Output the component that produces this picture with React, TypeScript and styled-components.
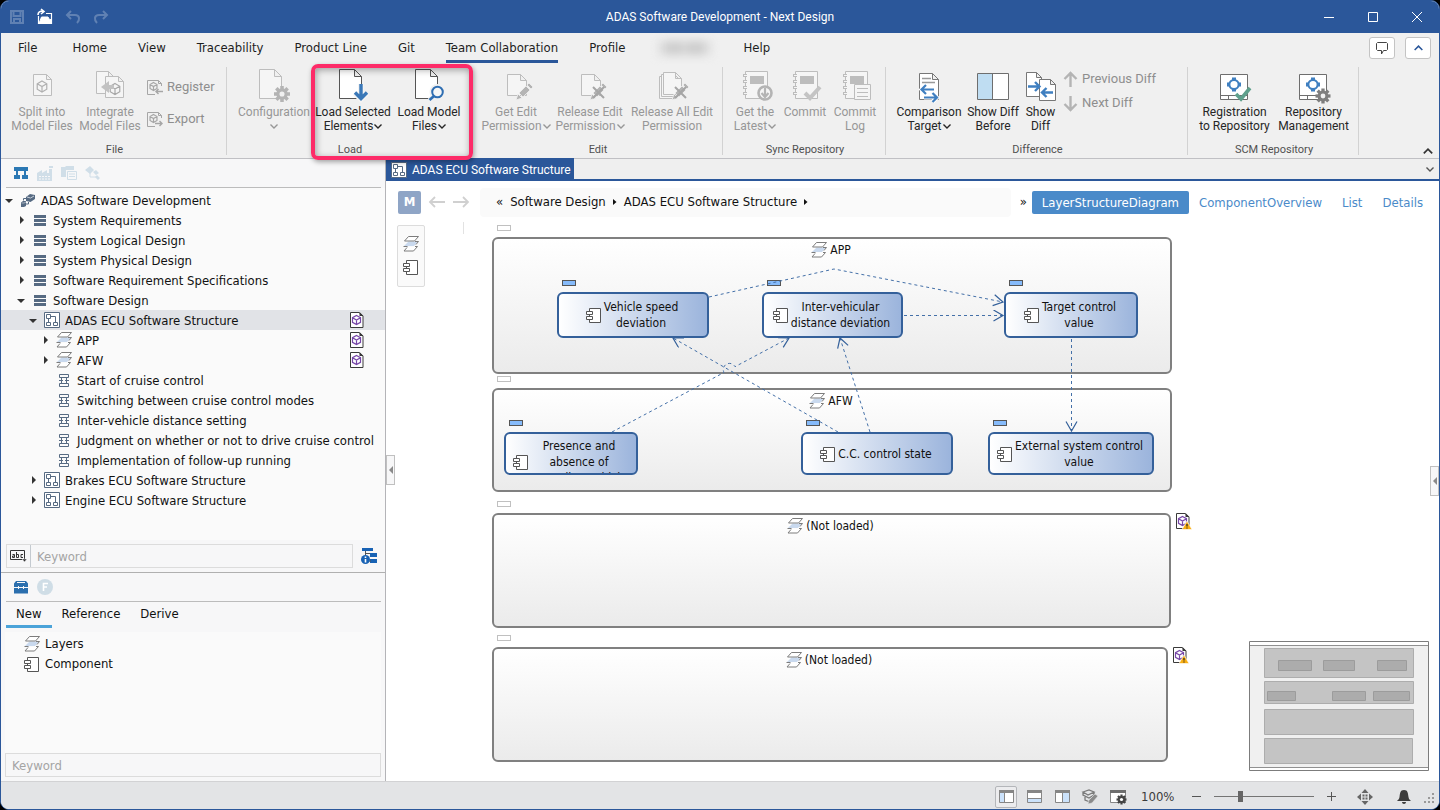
import React from "react";
import styled, { createGlobalStyle, css } from "styled-components";

const uiFont = `"DejaVu Sans Condensed", "DejaVu Sans", sans-serif`;
const ribbonFont = `Roboto, "Open Sans", sans-serif`;
const brand = "#2b579a";
const link = "#4a8ac9";
const slate = "#566a82";

const GlobalStyle = createGlobalStyle`
  *, *::before, *::after { box-sizing: border-box; }
  body { margin: 0; background: #000; color: #111; font: 13px/20px ${uiFont}; }
  button { margin: 0; padding: 0; border: 0; background: none; color: inherit; font: inherit; cursor: pointer; }
  ul { margin: 0; padding: 0; list-style: none; }
  a { text-decoration: none; }
  svg { display: block; overflow: visible; flex: none; }
`;

/* ---------- window frame ---------- */

const Window = styled.div`
  display: flex;
  flex-direction: column;
  min-height: 100vh;
  border: 1px solid ${brand};
  border-radius: 9px;
  overflow: hidden;
  background: #fff;
`;

const TitleBar = styled.header`
  display: grid;
  grid-template-columns: 1fr auto 1fr;
  align-items: center;
  height: 32px;
  background: ${brand};
  color: #fff;
`;

const Title = styled.h1`
  margin: 0;
  font: 400 12px/20px ${ribbonFont};
`;

const QuickActions = styled.div`
  display: flex;
  gap: 12px;
  padding-left: 8px;
`;

const QuickButton = styled.button<{ $dim?: boolean }>`
  color: #fff;
  opacity: ${(p) => (p.$dim ? 0.25 : 1)};
`;

const WindowButtons = styled.div`
  display: flex;
  justify-content: flex-end;
`;

const WindowButton = styled.button`
  display: grid;
  place-items: center;
  width: 44px;
  height: 32px;
`;

const MenuBar = styled.nav`
  display: flex;
  align-items: center;
  gap: 31px;
  height: 30px;
  padding: 0 8px 0 17px;
  background: #f0f0f0;
`;

const MenuItem = styled.button<{ $active?: boolean }>`
  height: 30px;
  padding-top: 2px;
  border-bottom: 3px solid ${(p) => (p.$active ? brand : "transparent")};
  color: #1e1e1e;
  white-space: nowrap;
  &:first-child { margin-right: 4px; }
`;

const BlurredItem = styled.div`
  width: 52px;
  height: 14px;
  margin: 0 2px;
  background: linear-gradient(90deg, #dcdcdc, #c8c8c8 30%, #d6d6d6 50%, #c6c6c6 70%, #e0e0e0);
  filter: blur(5px);
`;

const MenuTools = styled.div`
  display: flex;
  gap: 10px;
  margin-left: auto;
`;

const MenuTool = styled.button`
  display: grid;
  place-items: center;
  width: 26px;
  height: 22px;
  border: 1px solid #c4c4c4;
  border-radius: 3px;
  background: #fff;
`;

/* ---------- ribbon ---------- */

const RibbonBar = styled.section`
  display: flex;
  height: 96px;
  padding-top: 4px;
  border-bottom: 1px solid #c0c0c4;
  background: #f0f0f0;
  font: 12px/14px ${ribbonFont};
`;

const Group = styled.div<{ $divided?: boolean }>`
  position: relative;
  display: flex;
  flex-direction: column;
  justify-content: space-between;
  height: 88px;
  padding: 0 5px 0 7px;
  border-right: 1px solid ${(p) => (p.$divided ? "#d2d2d2" : "transparent")};
`;

const GroupItems = styled.div`
  display: flex;
`;

const GroupLabel = styled.div`
  height: 12px;
  color: #505050;
  font-size: 11px;
  line-height: 14px;
  text-align: center;
`;

const BigButton = styled.button<{ $width: number; $off?: boolean }>`
  display: flex;
  flex-direction: column;
  align-items: center;
  gap: 4px;
  width: ${(p) => p.$width}px;
  padding-top: 2px;
  color: ${(p) => (p.$off ? "#979797" : "#262626")};
  white-space: nowrap;
`;

const Caption = styled.span`
  display: block;
`;

const CaptionLine = styled.span`
  display: flex;
  align-items: center;
  justify-content: center;
  gap: 1px;
  height: 14px;
`;

const SmallColumn = styled.div<{ $gap: number; $top: number; $width: number }>`
  display: flex;
  flex-direction: column;
  gap: ${(p) => p.$gap}px;
  width: ${(p) => p.$width}px;
  padding: ${(p) => p.$top}px 0 0 3px;
`;

const SmallButton = styled.button`
  display: flex;
  align-items: center;
  gap: 4px;
  height: 16px;
  color: #8e8e8e;
  font-size: 13px;
  white-space: nowrap;
`;

const Highlight = styled.div`
  position: absolute;
  top: -3px;
  right: -2px;
  bottom: -5px;
  left: 84px;
  z-index: 5;
  border: 4px solid #fd2b68;
  border-radius: 7px;
  box-shadow: 1px 2px 5px rgba(0, 0, 0, 0.35), inset 1px 2px 7px rgba(0, 0, 0, 0.35);
  pointer-events: none;
`;

const RibbonCollapse = styled.button`
  align-self: flex-end;
  margin: 0 6px 4px auto;
`;

/* ---------- body ---------- */

const Body = styled.div`
  display: flex;
  flex: 1;
`;

const Sidebar = styled.aside`
  display: flex;
  flex-direction: column;
  width: 385px;
  flex: none;
  border-right: 1px solid #b4b4b8;
  background: #f7f7f8;
`;

const Pane = styled.section<{ $grow?: boolean }>`
  display: flex;
  flex-direction: column;
  ${(p) =>
    p.$grow
      ? css`flex: 1;`
      : css`
          min-height: 209px;
          border-top: 1px solid #b0b0b0;
        `}
`;

const PaneTools = styled.div`
  display: flex;
  align-items: center;
  gap: 8px;
  height: 29px;
  margin: 0 4px 0 5px;
  padding-left: 7px;
  border-bottom: 1px solid #bcbcbc;
`;

const Tree = styled.ul`
  flex: 1;
  padding-top: 2px;
  background: #fafafa;
`;

const TreeRow = styled.li<{ $level: number; $selected?: boolean }>`
  display: flex;
  align-items: center;
  height: 20px;
  padding-left: ${(p) => p.$level * 12}px;
  padding-right: 20px;
  background: ${(p) => (p.$selected ? "#e1e3e7" : "transparent")};
  white-space: nowrap;
`;

const Toggle = styled.button`
  display: grid;
  place-items: center;
  flex: none;
  width: 16px;
  height: 20px;
`;

const ToggleSpace = styled.span`
  flex: none;
  width: 16px;
`;

const TreeIcon = styled.span`
  display: grid;
  place-items: center;
  flex: none;
  width: 22px;
  margin-right: 2px;
`;

const TreeLabel = styled.button`
  flex: 1;
  min-width: 0;
  padding-top: 2px;
  text-align: left;
`;

const SearchRow = styled.form`
  display: flex;
  align-items: center;
  gap: 8px;
  padding: 4px 8px 4px 5px;
`;

const SearchBox = styled.div`
  display: flex;
  flex: 1;
  height: 24px;
  border: 1px solid #dcdcdc;
`;

const SearchMode = styled.button`
  display: grid;
  place-items: center;
  width: 24px;
  border-right: 1px solid #c4cad0;
`;

const SearchInput = styled.input`
  flex: 1;
  min-width: 0;
  padding: 1px 6px 0;
  border: 0;
  outline: 0;
  background: transparent;
  font: 13px/20px ${uiFont};
  &::placeholder { color: #a4a4a4; opacity: 1; }
`;

const FilterBox = styled.div`
  display: flex;
  height: 24px;
  margin: 0 4px 4px;
  border: 1px solid #dcdcdc;
`;

const Tabs = styled.div`
  display: flex;
  padding-left: 5px;
`;

const Tab = styled.button<{ $active?: boolean }>`
  height: 26px;
  padding: 0 10px;
  border-bottom: 3px solid ${(p) => (p.$active ? "#4ba3d9" : "transparent")};
`;

const ShapeList = styled.ul`
  flex: 1;
  margin: 4px 4px 0;
  padding: 2px 19px;
  background: #fafafa;
`;

const Shape = styled.li`
  display: flex;
  align-items: center;
  gap: 5px;
  height: 20px;
`;

/* ---------- editor ---------- */

const Editor = styled.main`
  position: relative;
  display: flex;
  flex: 1;
  flex-direction: column;
  min-width: 0;
`;

const DocTabs = styled.div`
  display: flex;
  align-items: center;
  justify-content: space-between;
  height: 22px;
  padding-right: 5px;
  border-bottom: 2px solid ${brand};
  background: #efefef;
`;

const DocTab = styled.button`
  display: flex;
  align-items: center;
  gap: 5px;
  height: 22px;
  padding: 2px 3px 0 5px;
  background: ${brand};
  color: #fff;
  font: 12px/20px ${ribbonFont};
`;

const DocHeader = styled.div`
  display: flex;
  align-items: center;
  height: 36px;
  padding: 6px 6px 0 12px;
`;

const ModelBadge = styled.button`
  width: 23px;
  height: 23px;
  border-radius: 2px;
  background: #8fa5c6;
  color: #fff;
  font-weight: 700;
`;

const HistoryButtons = styled.div`
  display: flex;
  gap: 8px;
  padding: 0 11px 0 8px;
  color: #d0d0d0;
`;

const Breadcrumbs = styled.nav`
  display: flex;
  flex: 1;
  align-items: center;
  gap: 7px;
  height: 29px;
  padding-left: 16px;
  border-radius: 4px;
  background: #fafafa;
`;

const Crumb = styled.a`
  color: #111;
  white-space: nowrap;
`;

const ViewTabs = styled.div`
  display: flex;
  align-items: center;
  padding-left: 9px;
`;

const ViewTab = styled.button<{ $active?: boolean }>`
  height: 23px;
  padding: 1px 10px 0;
  border-radius: 2px;
  color: ${(p) => (p.$active ? "#fff" : link)};
  background: ${(p) => (p.$active ? link : "transparent")};
`;

const MoreViews = styled.button`
  padding-right: 5px;
`;

const Canvas = styled.div`
  position: relative;
  flex: 1;
  min-height: 564px;
  font-size: 12px;
  line-height: 16px;
`;

const Palette = styled.div`
  position: absolute;
  top: 8px;
  left: 11px;
  display: flex;
  flex-direction: column;
  gap: 7px;
  padding: 10px 5px 11px;
  border: 1px solid #dcdcdc;
  border-radius: 2px;
  background: #fafafa;
`;

const Guide = styled.div`
  position: absolute;
  top: 5px;
  left: 77px;
  width: 1px;
  height: 12px;
  background: #e2e2e2;
`;

type Box = { $x: number; $y: number; $w: number; $h: number };

const placed = css<Box>`
  position: absolute;
  left: ${(p) => p.$x}px;
  top: ${(p) => p.$y}px;
  width: ${(p) => p.$w}px;
  height: ${(p) => p.$h}px;
`;

const Layer = styled.section<Box>`
  ${placed}
  border: 2px solid #808080;
  border-radius: 6px;
  background: linear-gradient(#fff, #ebebeb);
`;

const LayerTitle = styled.h2`
  display: flex;
  justify-content: center;
  gap: 3px;
  margin: 3px 2px 0 0;
  font: 400 12px/16px ${uiFont};
`;

const LayerMark = styled.span`
  position: absolute;
  top: -14px;
  left: 3px;
  width: 14px;
  height: 6px;
  border: 1px solid #c0c0c0;
  background: #fff;
`;

const LayerStatus = styled.span`
  position: absolute;
  top: -2px;
  right: -22px;
`;

const Connectors = styled.svg`
  position: absolute;
  top: 0;
  left: 0;
  width: 100%;
  height: 100%;
  pointer-events: none;
`;

const NodeMark = styled.span<{ $x: number; $y: number }>`
  position: absolute;
  left: ${(p) => p.$x + 5}px;
  top: ${(p) => p.$y - 12}px;
  width: 14px;
  height: 6px;
  border: 1px solid #555;
  background: #86bbfb;
`;

const Node = styled.div<Box>`
  ${placed}
  overflow: hidden;
  display: grid;
  grid-template-columns: auto auto;
  align-content: safe center;
  align-items: center;
  justify-content: center;
  gap: 2px;
  padding: 4px 2px 4px 0;
  border: 2px solid #34609a;
  border-radius: 6px;
  background: linear-gradient(90deg, #fff, #9bb4dc);
  text-align: center;
  white-space: pre-line;
`;

const Minimap = styled.svg`
  position: absolute;
  right: 10px;
  bottom: 10px;
  background: #fff;
`;

const Collapser = styled.button<{ $side: "left" | "right" }>`
  position: absolute;
  ${(p) => p.$side}: 0;
  top: ${(p) => (p.$side === "left" ? 296 : 307)}px;
  z-index: 2;
  display: grid;
  place-items: center;
  width: 9px;
  height: 30px;
  border: 1px solid #c0c0c0;
  background: #f7f7f8;
`;

/* ---------- status bar ---------- */

const StatusBar = styled.footer`
  display: flex;
  align-items: center;
  justify-content: flex-end;
  height: 28px;
  padding: 2px 4px 0;
  border-top: 1px solid #d2d2d4;
  background: #e3e4e6;
  color: #3c3c3c;
`;

const LayoutButtons = styled.div`
  display: flex;
  gap: 6px;
  margin-right: 12px;
`;

const LayoutButton = styled.button<{ $pressed?: boolean }>`
  display: grid;
  place-items: center;
  width: 22px;
  height: 22px;
  border: 1px solid ${(p) => (p.$pressed ? "#b4b6ba" : "transparent")};
  border-radius: 2px;
  background: ${(p) => (p.$pressed ? "#ececee" : "transparent")};
`;

const ZoomLabel = styled.output`
  width: 50px;
`;

const ZoomSlider = styled.input`
  width: 100px;
  height: 12px;
  margin: 0 12px;
  appearance: none;
  background: linear-gradient(#747474, #747474) center / 100% 1px no-repeat;
  &::-webkit-slider-thumb {
    appearance: none;
    width: 5px;
    height: 11px;
    background: #666;
  }
`;

const StatusIcons = styled.div`
  display: flex;
  align-items: center;
  gap: 23px;
  margin-left: 20px;
`;

const Grip = styled.span`
  align-self: flex-end;
  margin: 0 0 5px 12px;
`;

/* ---------- icons ---------- */

const Chevron = ({ up, color = "currentColor", w = 8 }: { up?: boolean; color?: string; w?: number }) => (
  <svg width={w} height={w / 2 + 1} viewBox="0 0 8 5" fill="none" stroke={color} strokeWidth="1.4">
    <path d={up ? "M.5 4.500 4 1l3.500 3.500" : "M.5.5 4 4 7.500.5"} />
  </svg>
);

const docPath = (x: number, y: number, w: number, h: number, f = 7) =>
  `M${x} ${y}h${w - f}l${f} ${f}v${h - f}h${-w}zM${x + w - f} ${y}v${f}h${f}`;

const Doc = (p: { x: number; y: number; w: number; h: number; f?: number; c?: string; bg?: string }) => (
  <path d={docPath(p.x + 0.5, p.y + 0.5, p.w, p.h, p.f)} fill={p.bg ?? "#fff"} stroke={p.c ?? "#6a6a6a"} />
);

const Cube = ({ x, y, r, c }: { x: number; y: number; r: number; c: string }) => {
  const dx = r * 0.87;
  const h = r / 2;
  return (
    <path
      transform={`translate(${x} ${y})`}
      d={`M0 ${-r}L${dx} ${-h}V${h}L0 ${r}L${-dx} ${h}V${-h}ZM${-dx} ${-h}L0 0L${dx} ${-h}M0 0V${r}`}
      fill="none"
      stroke={c}
      strokeWidth="1.2"
    />
  );
};

const Gear = ({ x, y, r, c, hole = "#f0f0f0" }: { x: number; y: number; r: number; c: string; hole?: string }) => (
  <g transform={`translate(${x} ${y})`} fill={c}>
    {[0, 45, 90, 135].map((a) => (
      <rect key={a} x={-r * 0.22} y={-r} width={r * 0.44} height={r * 2} transform={`rotate(${a})`} />
    ))}
    <circle r={r * 0.72} />
    <circle r={r * 0.32} fill={hole} />
  </g>
);

const grey = "#bdbdbd";
const pale = "#f5f5f5";

const Pencil = () => (
  <g fill="#b4b4b4" stroke="#f0f0f0" strokeWidth="0.8">
    <path d="m16 31 2-6 4 4z" />
    <path d="m19 24 7-7 4 4-7 7z" />
    <path d="m27 16 2-2 4 4-2 2z" />
  </g>
);

const Cross = () => <path d="m19 18 11 11M30 18 19 29" stroke="#a6a6a6" strokeWidth="2" />;

const Book = () => (
  <g>
    <path d="M6.500 2.500h22v27h-22z" fill={pale} stroke={grey} />
    <path d="M11 7h14v8h-14z" fill={grey} />
    <path d="M4 6.500h4M4 12.500h4M4 18.500h4M4 24.500h4" stroke={grey} strokeWidth="3" />
    <path d="M5 6.500h4M5 12.500h4M5 18.500h4M5 24.500h4" stroke={pale} />
  </g>
);

const Repo = () => (
  <g fill="none">
    <path d="M1.500 5.500h27v25h-27zM1.500 26.500h27M9.500 27v4M20.500 27v4" fill="#fff" stroke="#6e6e6e" />
    <circle cx="15" cy="15.500" r="4.600" stroke="#3f7fc0" strokeWidth="2" />
    <path d="M15 8.500v3M15 19.500v3M8 15.500h3M19 15.500h3" stroke="#3f7fc0" strokeWidth="4" />
  </g>
);

const big: Record<string, React.ReactNode> = {
  split: (<><Doc x={7} y={5} w={18} h={21} f={5} c={grey} bg={pale} /><Cube x={16} y={17.5} r={5.5} c="#b0b0b0" /></>),
  integrate: (
    <>
      <Doc x={2} y={2} w={17} h={22} f={5} c={grey} bg={pale} />
      <Doc x={11} y={7} w={18} h={21} f={5} c={grey} bg={pale} />
      <Cube x={21} y={20} r={5.5} c="#a8a8a8" />
      <path d="m7 18 8-6v4h5v4h-5v4z" fill="#c2c2c2" />
    </>
  ),
  config: (<><Doc x={1} y={0} w={22} h={29} c={grey} bg={pale} /><Gear x={24} y={25} r={8} c="#b4b4b4" /></>),
  loadSelected: (
    <>
      <Doc x={2} y={0} w={22} h={29} c="#555" />
      <path d="M24 15v15M18 24l6 6 6-6" fill="none" stroke="#f4f4f4" strokeWidth="6" />
      <path d="M24 15v14M18 23.500l6 6 6-6" fill="none" stroke="#3a78b8" strokeWidth="3.400" />
    </>
  ),
  loadModel: (
    <>
      <Doc x={2} y={0} w={22} h={29} c="#555" />
      <circle cx="24.500" cy="23" r="5.500" fill="#fff" stroke="#f0f0f0" strokeWidth="5" />
      <path d="m21 27-4.500 4" stroke="#f0f0f0" strokeWidth="5" />
      <circle cx="24.500" cy="23" r="5.300" fill="#f6f6f6" stroke="#2f6eb2" strokeWidth="2" />
      <path d="m21 27-4.500 4" stroke="#2f6eb2" strokeWidth="2.600" />
    </>
  ),
  getEdit: (<><Doc x={7} y={5} w={19} h={21} c={grey} bg={pale} f={6} /><Pencil /></>),
  releaseEdit: (<><Doc x={7} y={5} w={19} h={21} c={grey} bg={pale} f={6} /><Pencil /><Cross /></>),
  releaseAll: (
    <>
      <Doc x={3} y={7} w={17} h={22} c={grey} bg={pale} f={5} />
      <Doc x={5} y={5} w={18} h={22} c={grey} bg={pale} f={5} />
      <Doc x={7} y={3} w={18} h={22} c={grey} bg={pale} f={6} />
      <Pencil />
      <Cross />
    </>
  ),
  latest: (
    <>
      <Book />
      <circle cx="26" cy="24" r="6.500" fill={pale} stroke="#b4b4b4" strokeWidth="2.600" />
      <path d="M26 19v9M22.500 24l3.500 4 3.500-4" fill="none" stroke="#b4b4b4" strokeWidth="2.200" />
    </>
  ),
  commit: (<><Book /><path d="m16 24 5 5 10-11" fill="none" stroke="#c4c4c4" strokeWidth="4" /></>),
  log: (
    <>
      <Book />
      <path d="M15.500 15.500h16v15h-16z" fill={pale} stroke={grey} />
      <path d="M18 19.500h11M18 23.500h11M18 27.500h11" stroke={grey} />
    </>
  ),
  compare: (
    <>
      <Doc x={6} y={4} w={19} h={26} c="#777" f={6} />
      <path d="M9 9.500h9M9 13.500h13" stroke="#999" strokeWidth="1.500" />
      <path d="M21 20.500H9M13 16l-4.500 4.500L13 25M11 28.500h12M19.500 24l4.500 4.500-4.500 4.500" fill="none" stroke="#fff" strokeWidth="4" />
      <path d="M21 20.500H9M13 16l-4.500 4.500L13 25M11 28.500h12M19.500 24l4.500 4.500-4.500 4.500" fill="none" stroke="#3f7fc0" strokeWidth="2.200" />
    </>
  ),
  before: (
    <>
      <path d="M.5 4.500h31v26H.5z" fill="#fff" />
      <path d="M1 5h15v25H1z" fill="#bfddf2" />
      <path d="M.5 4.500h31v26H.5zM15.500 4.500v26" fill="none" stroke="#6e6e6e" />
    </>
  ),
  showDiff: (
    <>
      <Doc x={1} y={3} w={15} h={24} c="#777" f={5} />
      <Doc x={14} y={10} w={16} h={21} c="#777" f={5} />
      <path d="M3 17.500h10M10 13l4.500 4.500L10 22M28 23.500H18M21.500 19 17 23.500l4.500 4.500" fill="none" stroke="#3f7fc0" strokeWidth="2.400" />
    </>
  ),
  register: (<><Repo /><path d="m17 25 5 5 9-11" fill="none" stroke="#5fa08c" strokeWidth="3.600" /></>),
  manage: (<><Repo /><Gear x={25} y={27} r={7.5} c="#7e7e7e" /></>),
};

const SmallFile = ({ out }: { out?: boolean }) => (
  <svg width="16" height="16" viewBox="0 0 16 16" fill="none" stroke="#a6a6a6">
    <path d="M14.500 7V4.500l-3-3h-11v14H8M11.500 1.500v3h3" />
    <Cube x={6.5} y={7.5} r={4} c="#a6a6a6" />
    <path d={out ? "M8 12.500h7M12.500 10l2.500 2.500-2.500 2.500" : "M16 12.500H9M11.500 10 9 12.500l2.500 2.500"} strokeWidth="1.400" />
  </svg>
);

const BigArrow = ({ down }: { down?: boolean }) => (
  <svg width="15" height="17" viewBox="0 0 15 17" fill="none" stroke="#b4b4b4" strokeWidth="2.400">
    <path d={down ? "M7.500 1v14M1.500 9l6 6 6-6" : "M7.500 16V2M1.500 8l6-6 6 6"} />
  </svg>
);

const LayersIcon = () => (
  <svg width="16" height="16" viewBox="0 0 16 16" fill="none" stroke="#7c7c7c">
    <path d="M4 11.500 1 15h9.500l4-4.500H12" fill="#fff" />
    <path d="M5.500 5.500H15l-4 4.500H1z" fill="#c9d9ee" stroke="none" />
    <path d="M.5 10.500h4M12 5.500h3.500l-2.500 3" />
    <path d="M5.500.5h10l-4 4.500h-10z" fill="#fff" />
  </svg>
);

const ComponentIcon = () => (
  <svg width="16" height="16" viewBox="0 0 16 16" fill="#fff" stroke="#555">
    <path d="M3.500 1.500h11v14h-11z" />
    <path d="M.5 4.500h6v3h-6zM.5 9.500h6v3h-6z" />
  </svg>
);

const StructureIcon = () => (
  <svg width="16" height="16" viewBox="0 0 16 16" fill="#fff" stroke={slate}>
    <path d="M.5.5h15v15H.5z" />
    <path d="M2.500 2.500h4v4h-4zM2.500 10.500h4v3h-4zM9.500 10.500h4v3h-4zM6.500 4.500h5v6M4.500 6.500v4" />
  </svg>
);

const ScenarioIcon = () => (
  <svg width="12" height="13" viewBox="0 0 12 13" fill="none" stroke={slate}>
    <path d="M1.500.5h9v3h-9zM1.500 9.500h9v3h-9zM3.500 3.500v6M8.500 3.500v6M1 6.500h4M7 6.500h4" />
  </svg>
);

const ListIcon = () => (
  <svg width="12" height="11" viewBox="0 0 12 11" fill={slate}>
    <path d="M0 0h12v3H0zM0 4h12v3H0zM0 8h12v3H0z" />
  </svg>
);

const ProjectIcon = () => (
  <svg width="14" height="13" viewBox="0 0 14 13" fill={slate}>
    <path d="m5 3 4-3 5 1v4L9.500 8 5 7z" />
    <path d="m0 8.500 2-1.500h3v5l-2 1H0z" />
    <path d="m6 3 3.500 1L13 2" fill="none" stroke="#c8d0da" />
    <path d="M.5 9h2.500l2-1" fill="none" stroke="#c8d0da" strokeWidth=".7" />
    <path d="M2.500 6.500V4.500H5M5 10h2.500V8" fill="none" stroke={slate} />
  </svg>
);

const FileCube = ({ warn }: { warn?: boolean }) => (
  <svg width="16" height="16" viewBox="0 0 16 16" fill="none">
    <path d="M1.500.5H10l4 3.500v11.500H1.500z" fill="#fff" stroke="#3a3a3a" />
    <path d="M10.500 0v4h4z" fill="#3a3a3a" />
    <Cube x={7.5} y={8} r={4.6} c="#7747a8" />
    {warn && (
      <>
        <path d="m12 8 5 8.500H7z" fill="#f9ae12" stroke="#fff" strokeWidth=".6" />
        <path d="M12 11v2.500M12 14.500v1" stroke="#222" strokeWidth="1.200" />
      </>
    )}
  </svg>
);

const Arrow = ({ left }: { left?: boolean }) => (
  <svg width="16" height="12" viewBox="0 0 16 12" fill="none" stroke="currentColor" strokeWidth="1.800">
    <path d={left ? "M16 6H1M6 1 1 6l5 5" : "M0 6h15M10 1l5 5-5 5"} />
  </svg>
);

const Caret = ({ dir, c = "#333" }: { dir: "right" | "down" | "left"; c?: string }) => (
  <svg width="8" height="8" viewBox="0 0 8 8" fill={c}>
    <path d={{ right: "M3 0v8L7 4z", down: "M0 3h8L4 7z", left: "M6 0v8L2 4z" }[dir]} />
  </svg>
);

const CrumbMark = () => (
  <svg width="4" height="6" viewBox="0 0 4 6" fill="#111"><path d="M0 0v6l3.500-3z" /></svg>
);

const PaneLayout = ({ kind }: { kind: "left" | "bottom" | "right" }) => (
  <svg width="15" height="13" viewBox="0 0 15 13">
    <path d="M.5.5h14v12H.5z" fill="#fff" stroke="#868686" />
    <path d="M0 0h15v3H0z" fill="#868686" />
    <path d={{ left: "M1 3h4v9H1z", bottom: "M1 9h13v3H1z", right: "M8 3h6v9H8z" }[kind]} fill="#cbe2fb" />
    <path d={{ left: "M5.500 3v9", bottom: "M1 8.500h13", right: "M7.500 3v9" }[kind]} stroke="#868686" />
  </svg>
);

/* ---------- data ---------- */

type RibbonButton = { icon: string; lines: [string, string?]; width: number; menu?: boolean; off?: boolean };

const fileButtons: RibbonButton[] = [
  { icon: "split", lines: ["Split into", "Model Files"], width: 68, off: true },
  { icon: "integrate", lines: ["Integrate", "Model Files"], width: 68, off: true },
];
const loadButtons: RibbonButton[] = [
  { icon: "config", lines: ["Configuration", ""], width: 80, menu: true, off: true },
  { icon: "loadSelected", lines: ["Load Selected", "Elements"], width: 78, menu: true },
  { icon: "loadModel", lines: ["Load Model", "Files"], width: 74, menu: true },
];
const editButtons: RibbonButton[] = [
  { icon: "getEdit", lines: ["Get Edit", "Permission"], width: 74, menu: true, off: true },
  { icon: "releaseEdit", lines: ["Release Edit", "Permission"], width: 74, menu: true, off: true },
  { icon: "releaseAll", lines: ["Release All Edit", "Permission"], width: 90, off: true },
];
const syncButtons: RibbonButton[] = [
  { icon: "latest", lines: ["Get the", "Latest"], width: 50, menu: true, off: true },
  { icon: "commit", lines: ["Commit", ""], width: 50, off: true },
  { icon: "log", lines: ["Commit", "Log"], width: 50, off: true },
];
const diffButtons: RibbonButton[] = [
  { icon: "compare", lines: ["Comparison", "Target"], width: 72, menu: true },
  { icon: "before", lines: ["Show Diff", "Before"], width: 56 },
  { icon: "showDiff", lines: ["Show", "Diff"], width: 39 },
];
const scmButtons: RibbonButton[] = [
  { icon: "register", lines: ["Registration", "to Repository"], width: 79 },
  { icon: "manage", lines: ["Repository", "Management"], width: 79 },
];

type Item = { label: string; level: number; icon: React.ReactNode; open?: boolean; leaf?: boolean; selected?: boolean; file?: boolean };

const tree: Item[] = [
  { label: "ADAS Software Development", level: 0, icon: <ProjectIcon />, open: true },
  { label: "System Requirements", level: 1, icon: <ListIcon /> },
  { label: "System Logical Design", level: 1, icon: <ListIcon /> },
  { label: "System Physical Design", level: 1, icon: <ListIcon /> },
  { label: "Software Requirement Specifications", level: 1, icon: <ListIcon /> },
  { label: "Software Design", level: 1, icon: <ListIcon />, open: true },
  { label: "ADAS ECU Software Structure", level: 2, icon: <StructureIcon />, open: true, selected: true, file: true },
  { label: "APP", level: 3, icon: <LayersIcon />, file: true },
  { label: "AFW", level: 3, icon: <LayersIcon />, file: true },
  { label: "Start of cruise control", level: 3, icon: <ScenarioIcon />, leaf: true },
  { label: "Switching between cruise control modes", level: 3, icon: <ScenarioIcon />, leaf: true },
  { label: "Inter-vehicle distance setting", level: 3, icon: <ScenarioIcon />, leaf: true },
  { label: "Judgment on whether or not to drive cruise control", level: 3, icon: <ScenarioIcon />, leaf: true },
  { label: "Implementation of follow-up running", level: 3, icon: <ScenarioIcon />, leaf: true },
  { label: "Brakes ECU Software Structure", level: 2, icon: <StructureIcon /> },
  { label: "Engine ECU Software Structure", level: 2, icon: <StructureIcon /> },
];

const layers = [
  { title: "APP", x: 106, y: 20, w: 680, h: 137 },
  { title: "AFW", x: 106, y: 171, w: 680, h: 104 },
  { title: "(Not loaded)", x: 106, y: 296, w: 679, h: 115, missing: true },
  { title: "(Not loaded)", x: 106, y: 430, w: 676, h: 115, missing: true },
];

const nodes = [
  { text: "Vehicle speed\ndeviation", x: 171, y: 75, w: 152, h: 46 },
  { text: "Inter-vehicular\ndistance deviation", x: 376, y: 75, w: 141, h: 46 },
  { text: "Target control\nvalue", x: 618, y: 75, w: 134, h: 46 },
  { text: "Presence and\nabsence of\npreceding vehicle", x: 118, y: 215, w: 134, h: 43 },
  { text: "C.C. control state", x: 415, y: 215, w: 152, h: 43 },
  { text: "External system control\nvalue", x: 602, y: 215, w: 166, h: 43 },
];

const links = [
  "M323 80 448 52 617 85",
  "M518 98.500H617",
  "M685.500 122V214",
  "M226 215 338 155.500A6 6 0 0 1 349 149.700L403 121",
  "M452 215 287 121",
  "M484 215 454 121",
];

const RibbonButtons = ({ items }: { items: RibbonButton[] }) => (
  <>
    {items.map((b) => (
      <BigButton key={b.icon} $width={b.width} $off={b.off}>
        <svg width="32" height="32" viewBox="0 0 32 32">{big[b.icon]}</svg>
        <Caption>
          <CaptionLine>{b.lines[0]}</CaptionLine>
          <CaptionLine>
            {b.lines[1]}
            {b.menu && <Chevron />}
          </CaptionLine>
        </Caption>
      </BigButton>
    ))}
  </>
);

const Ribbon = () => (
  <RibbonBar>
    <Group $divided>
      <GroupItems>
        <RibbonButtons items={fileButtons} />
        <SmallColumn $gap={16} $top={12} $width={77}>
          <SmallButton><SmallFile />Register</SmallButton>
          <SmallButton><SmallFile out />Export</SmallButton>
        </SmallColumn>
      </GroupItems>
      <GroupLabel>File</GroupLabel>
    </Group>
    <Group>
      <GroupItems><RibbonButtons items={loadButtons} /></GroupItems>
      <GroupLabel>Load</GroupLabel>
      <Highlight />
    </Group>
    <Group $divided>
      <GroupItems><RibbonButtons items={editButtons} /></GroupItems>
      <GroupLabel>Edit</GroupLabel>
    </Group>
    <Group $divided>
      <GroupItems><RibbonButtons items={syncButtons} /></GroupItems>
      <GroupLabel>Sync Repository</GroupLabel>
    </Group>
    <Group $divided>
      <GroupItems>
        <RibbonButtons items={diffButtons} />
        <SmallColumn $gap={8} $top={4} $width={122}>
          <SmallButton><BigArrow />Previous Diff</SmallButton>
          <SmallButton><BigArrow down />Next Diff</SmallButton>
        </SmallColumn>
      </GroupItems>
      <GroupLabel>Difference</GroupLabel>
    </Group>
    <Group $divided>
      <GroupItems><RibbonButtons items={scmButtons} /></GroupItems>
      <GroupLabel>SCM Repository</GroupLabel>
    </Group>
    <RibbonCollapse aria-label="Collapse ribbon"><Chevron up w={10} color="#333" /></RibbonCollapse>
  </RibbonBar>
);

const MenuItems = ["File", "Home", "View", "Traceability", "Product Line", "Git", "Team Collaboration", "Profile"];

const TopBars = () => (
  <>
    <TitleBar>
      <QuickActions>
        <QuickButton $dim aria-label="Save">
          <svg width="16" height="16" viewBox="0 0 16 16" fill="none" stroke="currentColor" strokeWidth="2">
            <path d="M2 2h12v12H2zM4.500 2v5h7V2M5 14v-4h6v4" />
          </svg>
        </QuickButton>
        <QuickButton aria-label="Open">
          <svg width="16" height="16" viewBox="0 0 16 16" fill="none" stroke="currentColor">
            <path d="M9 4.500h5.500v10h-13V7" strokeWidth="1.200" />
            <path d="M2 14.500 4.500 8H11l1.500 2.500h2v4z" fill="currentColor" />
            <path d="M1 6c0-3 2-4 5-4M4 0l3 2.500L4 5" strokeWidth="1.600" />
          </svg>
        </QuickButton>
        <QuickButton $dim aria-label="Undo">
          <svg width="16" height="16" viewBox="0 0 16 16" fill="none" stroke="currentColor" strokeWidth="2">
            <path d="M6 2 2 6l4 4M2 6h8c5 0 5 5 2 8" />
          </svg>
        </QuickButton>
        <QuickButton $dim aria-label="Redo">
          <svg width="16" height="16" viewBox="0 0 16 16" fill="none" stroke="currentColor" strokeWidth="2">
            <path d="m10 2 4 4-4 4M14 6H6c-5 0-5 5-2 8" />
          </svg>
        </QuickButton>
      </QuickActions>
      <Title>ADAS Software Development - Next Design</Title>
      <WindowButtons>
        <WindowButton aria-label="Minimize">
          <svg width="10" height="10" stroke="#fff"><path d="M0 5.500h10" /></svg>
        </WindowButton>
        <WindowButton aria-label="Maximize">
          <svg width="10" height="10" stroke="#fff" fill="none"><path d="M.5.5h9v9h-9z" /></svg>
        </WindowButton>
        <WindowButton aria-label="Close">
          <svg width="10" height="10" stroke="#fff"><path d="m0 0 10 10M10 0 0 10" /></svg>
        </WindowButton>
      </WindowButtons>
    </TitleBar>
    <MenuBar>
      {MenuItems.map((m) => (
        <MenuItem key={m} $active={m === "Team Collaboration"}>{m}</MenuItem>
      ))}
      <BlurredItem />
      <MenuItem>Help</MenuItem>
      <MenuTools>
        <MenuTool aria-label="Feedback">
          <svg width="12" height="13" viewBox="0 0 12 13" fill="none" stroke="#444">
            <path d="M1.500.5h9l1 1v6l-1 1H7.500L5.500 12V8.500h-4l-1-1v-6z" />
          </svg>
        </MenuTool>
        <MenuTool aria-label="Minimize ribbon"><Chevron up w={9} color={brand} /></MenuTool>
      </MenuTools>
    </MenuBar>
  </>
);

const ExplorerPane = () => (
  <Pane $grow>
    <PaneTools>
      <button aria-label="Model">
        <svg width="16" height="13" viewBox="0 0 16 13" fill="#2b78b4">
          <path d="M1 0h14v4H1zM1 8h6v4H1zM9 8h6v4H9zM3 4h2v4H3zM11 4h2v4h-2z" />
        </svg>
      </button>
      <button aria-label="Product line">
        <svg width="16" height="16" viewBox="0 0 16 16" fill="#d0dee8">
          <path d="M0 16V8l5-3v3l5-3v3h2V4h3v12zM12 1h4v2h-4z" />
          <path d="M2 11.500h12M2 14h12" stroke="#f7f7f8" strokeDasharray="2 1" />
        </svg>
      </button>
      <button aria-label="Documents">
        <svg width="16" height="14" viewBox="0 0 16 14" fill="#d0dee8">
          <path d="M0 1h4l1-1h8v4H5v7H0z" />
          <path d="M6.500 5.500h9v8h-9z" fill="#f7f7f8" stroke="#d0dee8" />
          <path d="M8 8h6M8 10.500h6" stroke="#d0dee8" />
        </svg>
      </button>
      <button aria-label="Relations">
        <svg width="16" height="14" viewBox="0 0 16 14" fill="#d0dee8">
          <path d="m0 4 5-4 4 4-4 4zM8 6l3-2 3 3-3 2zM10 11l2-2 3 3-2 2z" />
          <path d="M5 6v5h6" fill="none" stroke="#d0dee8" />
        </svg>
      </button>
    </PaneTools>
    <Tree>
      {tree.map((t) => (
        <TreeRow key={t.label} $level={t.level} $selected={t.selected}>
          {t.leaf ? <ToggleSpace /> : (
            <Toggle aria-label={`Toggle ${t.label}`}><Caret dir={t.open ? "down" : "right"} /></Toggle>
          )}
          <TreeIcon>{t.icon}</TreeIcon>
          <TreeLabel>{t.label}</TreeLabel>
          {t.file && <FileCube />}
        </TreeRow>
      ))}
    </Tree>
    <SearchRow onSubmit={(e) => e.preventDefault()}>
      <SearchBox>
        <SearchMode type="button" aria-label="Match text">
          <svg width="17" height="13" viewBox="0 0 17 13">
            <path d="M.5.5h14v9H.5z" fill="none" stroke="#333" />
            <path d="M2.500 4.500h2v3h-2v-1.500h2M6.500 2v5.500h2v-3h-2M13 4.500h-2v3h2" fill="none" stroke="#333" />
            <path d="M12 9h5l-2.500 3z" fill="#333" stroke="#f7f7f8" strokeWidth=".5" />
          </svg>
        </SearchMode>
        <SearchInput aria-label="Search model" placeholder="Keyword" />
      </SearchBox>
      <button type="button" aria-label="Show details">
        <svg width="16" height="16" viewBox="0 0 16 16" fill="#1862b4">
          <path d="M1 0h11v3H1zM9 5h7v4H9zM9 11h7v4H9z" />
          <path d="M4.500 3v4M4.500 5.500H9M8 13h2" stroke="#555" />
          <circle cx="4.500" cy="11.500" r="4.500" />
          <path d="M4.500 8.500v1.500M4.500 11v3.500" stroke="#fff" strokeWidth="1.600" />
        </svg>
      </button>
    </SearchRow>
  </Pane>
);

const ToolboxPane = () => (
  <Pane>
    <PaneTools>
      <button aria-label="Toolbox">
        <svg width="16" height="14" viewBox="0 0 16 14" fill="#2b6fae">
          <path d="M1 7V3.500L3 1h10l2 2.500V7zM1 8h14v5.500H1z" />
          <path d="M4 2.500h8M5.500 6v3M10.500 6v3" stroke="#f7f7f8" />
        </svg>
      </button>
      <button aria-label="Fields">
        <svg width="16" height="16" viewBox="0 0 16 16">
          <circle cx="8" cy="8" r="8" fill="#cfdde6" />
          <path d="M6.500 12V4.500H11M6.500 8H10" fill="none" stroke="#fff" strokeWidth="1.600" />
        </svg>
      </button>
    </PaneTools>
    <Tabs>
      <Tab $active>New</Tab>
      <Tab>Reference</Tab>
      <Tab>Derive</Tab>
    </Tabs>
    <ShapeList>
      <Shape><LayersIcon />Layers</Shape>
      <Shape><ComponentIcon />Component</Shape>
    </ShapeList>
    <FilterBox><SearchInput aria-label="Filter shapes" placeholder="Keyword" /></FilterBox>
  </Pane>
);

const Overview = () => (
  <Minimap width="180" height="130" viewBox="0 0 180 130">
    <path d="M.5.5h179v129H.5z" fill="#fff" stroke="#7c7c7c" />
    <path d="M1 4.500h178v122H1z" fill="#f0f0f0" />
    <path d="M1 4.500h178M1 126.500h178" stroke="#909090" />
    <g fill="#c4c4c4" stroke="#adadad">
      <path d="M15.500 7.500h149v29h-149zM15.500 40.500h149v22h-149zM15.500 68.500h149v25h-149zM15.500 97.500h148v25h-148z" />
    </g>
    <g fill="#acacac" stroke="#9c9c9c">
      <path d="M29.500 19.500h33v10h-33zM74.500 19.500h31v10h-31zM128.500 19.500h29v10h-29zM18.500 50.500h28v9h-28zM83.500 50.500h33v9h-33zM124.500 50.500h36v9h-36z" />
    </g>
  </Minimap>
);

const Diagram = () => (
  <Canvas>
    <Palette>
      <button aria-label="Add layer"><LayersIcon /></button>
      <button aria-label="Add component"><ComponentIcon /></button>
    </Palette>
    <Guide />
    {layers.map((l) => (
      <Layer key={l.y} $x={l.x} $y={l.y} $w={l.w} $h={l.h}>
        <LayerMark />
        <LayerTitle><LayersIcon />{l.title}</LayerTitle>
        {l.missing && <LayerStatus><FileCube warn /></LayerStatus>}
      </Layer>
    ))}
    {nodes.map((n) => (
      <React.Fragment key={n.text}>
        <NodeMark $x={n.x} $y={n.y} />
        <Node $x={n.x} $y={n.y} $w={n.w} $h={n.h}>
          <ComponentIcon />
          <span>{n.text}</span>
        </Node>
      </React.Fragment>
    ))}
    <Connectors>
      <defs>
        <marker id="open-arrow" markerWidth="12" markerHeight="14" refX="10" refY="6" orient="auto" markerUnits="userSpaceOnUse">
          <path d="M.5.5 10 6 .5 11.500" fill="none" stroke="#34609a" strokeWidth="1.200" />
        </marker>
      </defs>
      {links.map((d) => (
        <path key={d} d={d} fill="none" stroke="#4470a8" strokeDasharray="3 3" markerEnd="url(#open-arrow)" />
      ))}
    </Connectors>
    <Overview />
  </Canvas>
);

export default function App() {
  return (
    <Window>
      <GlobalStyle />
      <TopBars />
      <Ribbon />
      <Body>
        <Sidebar>
          <ExplorerPane />
          <ToolboxPane />
        </Sidebar>
        <Editor>
          <DocTabs>
            <DocTab><StructureIcon />ADAS ECU Software Structure</DocTab>
            <Chevron color="#555" />
          </DocTabs>
          <DocHeader>
            <ModelBadge>M</ModelBadge>
            <HistoryButtons>
              <button aria-label="Back"><Arrow left /></button>
              <button aria-label="Forward"><Arrow /></button>
            </HistoryButtons>
            <Breadcrumbs>
              <span>«</span>
              <Crumb href="#design">Software Design</Crumb>
              <CrumbMark />
              <Crumb href="#structure">ADAS ECU Software Structure</Crumb>
              <CrumbMark />
            </Breadcrumbs>
            <ViewTabs>
              <MoreViews aria-label="More views">»</MoreViews>
              <ViewTab $active>LayerStructureDiagram</ViewTab>
              <ViewTab>ComponentOverview</ViewTab>
              <ViewTab>List</ViewTab>
              <ViewTab>Details</ViewTab>
            </ViewTabs>
          </DocHeader>
          <Diagram />
          <Collapser $side="left" aria-label="Collapse sidebar"><Caret dir="left" c="#8a8a8a" /></Collapser>
          <Collapser $side="right" aria-label="Expand inspector"><Caret dir="left" c="#8a8a8a" /></Collapser>
        </Editor>
      </Body>
      <StatusBar>
        <LayoutButtons>
          <LayoutButton $pressed aria-label="Left pane"><PaneLayout kind="left" /></LayoutButton>
          <LayoutButton aria-label="Bottom pane"><PaneLayout kind="bottom" /></LayoutButton>
          <LayoutButton aria-label="Right pane"><PaneLayout kind="right" /></LayoutButton>
          <LayoutButton aria-label="Edit model">
            <svg width="16" height="16" viewBox="0 0 16 16" fill="#e3e4e6" stroke="#7a7a7a" strokeWidth="1.300">
              <path d="m1 3 6-2 5 2-6 3zM1 3v3l6 3 5-3V3M3 8v3l5 2" />
              <path d="m6 15 1-4 6-6 3 2-6 7z" fill="#8a8a8a" stroke="#e3e4e6" strokeWidth=".6" />
            </svg>
          </LayoutButton>
          <LayoutButton aria-label="View settings">
            <svg width="17" height="14" viewBox="0 0 17 14">
              <path d="M.5.5h15v12H.5z" fill="#fff" stroke="#868686" />
              <path d="M0 0h16v3H0z" fill="#6e6e6e" />
              <Gear x={11.5} y={9.5} r={5} c="#444" hole="#fff" />
            </svg>
          </LayoutButton>
        </LayoutButtons>
        <ZoomLabel>100%</ZoomLabel>
        <button aria-label="Zoom out">
          <svg width="11" height="11" stroke="#555"><path d="M1 5.500h9" /></svg>
        </button>
        <ZoomSlider type="range" min={0} max={100} defaultValue={25} aria-label="Zoom" />
        <button aria-label="Zoom in">
          <svg width="11" height="11" stroke="#555"><path d="M1 5.500h9M5.500 1v9" /></svg>
        </button>
        <StatusIcons>
          <button aria-label="Fit to window">
            <svg width="16" height="16" viewBox="0 0 16 16" fill="#666">
              <path d="m8 0 3.500 4h-7zM8 16l3.500-4h-7zM0 8l4-3.500v7zM16 8l-4-3.500v7zM5.500 5.500h2v2h-2zM8.500 5.500h2v2h-2zM5.500 8.500h2v2h-2zM8.500 8.500h2v2h-2z" />
            </svg>
          </button>
          <button aria-label="Notifications">
            <svg width="16" height="16" viewBox="0 0 16 16" fill="#3c3c3c">
              <path d="M8 1c4 0 4 3.500 4.500 7 .3 2 1 2.500 2.500 4H1c1.500-1.500 2.200-2 2.500-4C4 4.500 4 1 8 1zM6 13h4c0 2.500-4 2.500-4 0z" />
            </svg>
          </button>
        </StatusIcons>
        <Grip>
          <svg width="11" height="11" viewBox="0 0 11 11" fill="#999">
            <path d="M8 0h2v2H8zM4 4h2v2H4zM8 4h2v2H8zM0 8h2v2H0zM4 8h2v2H4zM8 8h2v2H8z" />
          </svg>
        </Grip>
      </StatusBar>
    </Window>
  );
}
